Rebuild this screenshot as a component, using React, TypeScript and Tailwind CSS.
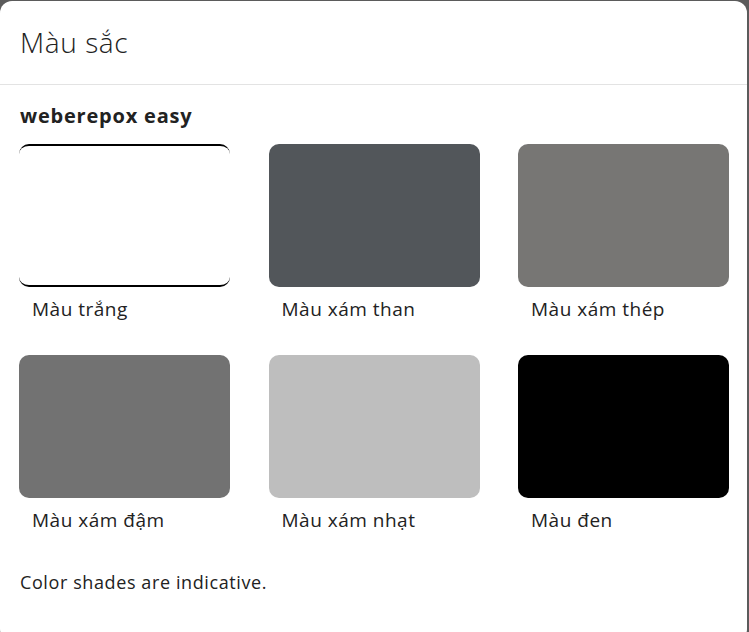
import React from "react";

const swatches = [
  { name: "Màu trắng", cls: "bg-white border-y-2 border-black" },
  { name: "Màu xám than", cls: "bg-[#52565a]" },
  { name: "Màu xám thép", cls: "bg-[#777674]" },
  { name: "Màu xám đậm", cls: "bg-[#727272]" },
  { name: "Màu xám nhạt", cls: "bg-[#bebebe]" },
  { name: "Màu đen", cls: "bg-black" },
];

export default function App() {
  return (
    <div className="w-[749px] h-[632px] bg-[#5b5b5b] pt-[1px] pr-[2px] overflow-hidden" style={{ fontFamily: '"Open Sans", "Noto Sans", sans-serif' }}>
      <div className="h-[640px] bg-white rounded-[12px] text-[#222]">
        <div className="h-[84px] border-b border-[#e3e3e3] flex items-center px-[20px] pb-[2px]">
          <h1 className="text-[28px] font-light leading-none tracking-[0.6px] text-[#222]">Màu sắc</h1>
        </div>
        <div className="px-[19px] pt-[18px]">
          <h2 className="text-[20px] font-bold leading-[26px] pl-[1px] tracking-[0.8px]">weberepox easy</h2>
          <div className="grid grid-cols-[211px_211px_211px] gap-x-[38.5px] gap-y-[33px] mt-[15px]">
            {swatches.map((s) => (
              <div key={s.name}>
                <div className={`h-[143px] rounded-[10px] ${s.cls}`} />
                <div className="pl-[13px] pt-[9px] text-[19px] leading-[26px] tracking-[0.5px] text-[#222]">{s.name}</div>
              </div>
            ))}
          </div>
          <p className="mt-[37px] pl-[1px] text-[18px] leading-[24px] tracking-[0.6px] text-[#222]">Color shades are indicative.</p>
        </div>
      </div>
    </div>
  );
}
